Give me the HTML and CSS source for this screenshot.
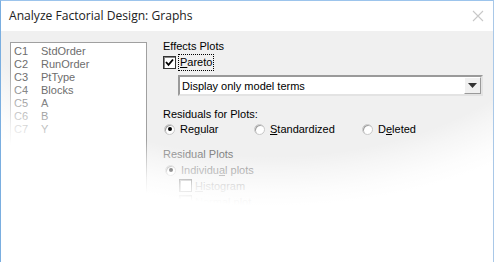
FILE: index.html
```html
<!DOCTYPE html>
<html>
<head>
<meta charset="utf-8">
<link rel="stylesheet" href="styles.css">
</head>
<body>
<div class="window">
  <div class="titlebar">
    <span class="title">Analyze Factorial Design: Graphs</span>
    <svg class="close" width="12" height="12" viewBox="0 0 12 12"><path d="M1 1 L11 11 M11 1 L1 11" stroke="#c8c8c8" stroke-width="1.1" fill="none"/></svg>
  </div>
  <div class="client">
    <div class="listbox">
      <div class="row"><span class="cn">C1</span><span>StdOrder</span></div>
      <div class="row"><span class="cn">C2</span><span>RunOrder</span></div>
      <div class="row"><span class="cn">C3</span><span>PtType</span></div>
      <div class="row"><span class="cn">C4</span><span>Blocks</span></div>
      <div class="row"><span class="cn">C5</span><span>A</span></div>
      <div class="row"><span class="cn">C6</span><span>B</span></div>
      <div class="row"><span class="cn">C7</span><span>Y</span></div>
    </div>
    <div class="pane">
      <div class="label">Effects Plots</div>
      <div class="check-row">
        <span class="checkbox checked"><svg width="9" height="9" viewBox="0 0 9 9"><path d="M1 4 L3.5 6.8 L8 1.5" stroke="#000" stroke-width="1.8" fill="none"/></svg></span>
        <span class="focus"><u>P</u>areto</span>
      </div>
      <div class="combo">
        <span class="combo-text">Display only model terms</span>
        <span class="combo-btn"><svg width="9" height="5" viewBox="0 0 9 5"><path d="M0 0 H9 L4.5 5 Z" fill="#333"/></svg></span>
      </div>
      <div class="label lbl2">Residuals for Plots:</div>
      <div class="radios">
        <div class="radio-item r1"><span class="radio on"></span><span>Re<u>g</u>ular</span></div>
        <div class="radio-item r2"><span class="radio"></span><span><u>S</u>tandardized</span></div>
        <div class="radio-item r3"><span class="radio"></span><span>D<u>e</u>leted</span></div>
      </div>
      <div class="label lbl3 dis">Residual Plots</div>
      <div class="radio-item sub dis"><span class="radio on"></span><span>Individu<u>a</u>l plots</span></div>
      <div class="check-row sub2 dis"><span class="checkbox"></span><span><u>H</u>istogram</span></div>
      <div class="check-row sub2 dis"><span class="checkbox"></span><span>Nor<u>m</u>al plot</span></div>
    </div>
    <div class="fade"></div>
  </div>
</div>
</body>
</html>
```

FILE: styles.css
```css
html, body {
  margin: 0;
  padding: 0;
  background: #ffffff;
}
.window {
  width: 494px;
  height: 262px;
  box-sizing: border-box;
  border-left: 1px solid #7aaee0;
  border-top: 1px solid #9cc4ec;
  border-right: 1px solid #a9c8e8;
  overflow: hidden;
  display: flex;
  flex-direction: column;
  font-family: "Liberation Sans", Arial, sans-serif;
  font-size: 11px;
  color: #000;
}
.titlebar {
  height: 30px;
  flex: none;
  background: #fff;
  display: flex;
  align-items: center;
  justify-content: space-between;
  padding: 0 9px 0 8px;
}
.title {
  font-family: "Open Sans", sans-serif;
  font-size: 12.1px;
  color: #222;
  margin-top: -1px;
}
.client {
  flex: 1;
  position: relative;
  background: #f0f0f0;
  display: flex;
  padding: 11px 0 0 9px;
}
.listbox {
  width: 132px;
  height: 190px;
  border: 1px solid #a0a0a0;
  background: #fff;
  padding: 2px 0 0 3px;
  box-sizing: content-box;
  color: #6d6d6d;
}
.row {
  height: 13px;
  line-height: 13px;
  display: flex;
}
.cn {
  width: 27px;
}
.pane {
  margin-left: 16px;
  display: flex;
  flex-direction: column;
  align-items: flex-start;
}
.label {
  line-height: 13px;
  height: 13px;
  margin-top: -2px;
}
.check-row {
  display: flex;
  align-items: center;
  margin-top: 2px;
  height: 15px;
}
.checkbox {
  width: 11px;
  height: 11px;
  border: 1px solid #333;
  background: #fff;
  display: flex;
  align-items: center;
  justify-content: center;
  margin-right: 3px;
  box-shadow: inset 1px 1px 0 #888;
}
.focus {
  outline: 1px dotted #000;
  outline-offset: 0;
  padding: 1px 1px;
  line-height: 13px;
}
.combo {
  margin-top: 5px;
  margin-left: 15px;
  width: 301px;
  height: 17px;
  border: 2px solid;
  border-color: #9a9a9a #e3e3e3 #e3e3e3 #9a9a9a;
  background: #fff;
  display: flex;
  align-items: center;
  justify-content: space-between;
}
.combo-text {
  padding-left: 2px;
}
.combo-btn {
  width: 15px;
  height: 15px;
  background: #f0f0f0;
  border: 1px solid;
  border-color: #fff #9a9a9a #9a9a9a #fff;
  display: flex;
  align-items: center;
  justify-content: center;
}
.lbl2 {
  margin-top: 12px;
}
.radios {
  display: flex;
  margin-top: 1px;
}
.radio-item {
  display: flex;
  align-items: center;
  height: 14px;
}
.r1 { width: 90px; }
.r2 { width: 108px; }
.radio {
  width: 11px;
  height: 11px;
  border-radius: 50%;
  background: #fff;
  border: 1px solid #c8c8c8;
  box-shadow: inset 1px 1px 0 #a0a0a0;
  margin: 0 5px 0 1px;
  box-sizing: border-box;
  display: flex;
  align-items: center;
  justify-content: center;
}
.radio.on::after {
  content: "";
  width: 4px;
  height: 4px;
  border-radius: 50%;
  background: #000;
}
.lbl3 {
  margin-top: 12px;
}
.dis {
  color: #808080;
}
.sub {
  margin-top: 2px;
  margin-left: 1px;
}
.sub2 {
  margin-left: 16px;
  margin-top: 1px;
}
.fade {
  position: absolute;
  left: 0;
  right: 0;
  top: 0;
  bottom: 0;
  pointer-events: none;
  background: radial-gradient(ellipse 412px 250px at 270px -60px, rgba(255,255,255,0) 74%, rgba(255,255,255,0.4) 80%, rgba(255,255,255,0.82) 88%, #fff 94%);
}
```
